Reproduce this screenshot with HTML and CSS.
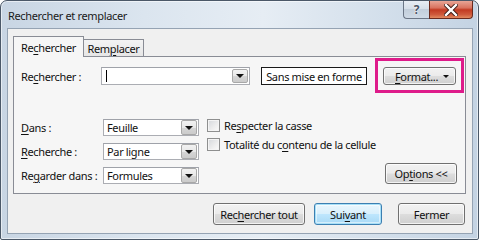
FILE: index.html
```html
<!DOCTYPE html>
<html lang="fr">
<head>
<meta charset="utf-8">
<title>Rechercher et remplacer</title>
<link rel="stylesheet" href="styles.css">
</head>
<body>
<div class="window">
  <div class="titlebar">
    <span class="title">Rechercher et remplacer</span>
    <div class="caption-btns">
      <div class="cap cap-help">?</div>
      <div class="cap cap-close">
        <svg width="14" height="12" viewBox="0 0 14 12"><path d="M2 1 L12 11 M12 1 L2 11" stroke="#3b1a14" stroke-width="4.2" stroke-linecap="square"/><path d="M2 1 L12 11 M12 1 L2 11" stroke="#ffffff" stroke-width="2.4" stroke-linecap="square"/></svg>
      </div>
    </div>
  </div>
  <div class="client">
    <div class="tabs">
      <div class="tab tab-active">Re<u>c</u>hercher</div>
      <div class="tab">Rem<u>p</u>lacer</div>
    </div>
    <div class="pane">
      <div class="find-row">
        <span class="lbl lbl-find">Re<u>c</u>hercher :</span>
        <div class="combo combo-find"><span class="caret"></span><span class="dd"><i class="tri"></i></span></div>
        <div class="preview">Sans mise en forme</div>
        <div class="highlight">
          <div class="btn btn-format"><span><u>F</u>ormat...</span><i class="tri tri-small"></i></div>
        </div>
      </div>
      <div class="options">
        <div class="sel-grid">
          <span class="lbl"><u>D</u>ans :</span>
          <div class="combo combo-sel"><span class="val">Feuille</span><span class="dd"><i class="tri"></i></span></div>
          <span class="lbl"><u>R</u>echerche :</span>
          <div class="combo combo-sel"><span class="val">Par ligne</span><span class="dd"><i class="tri"></i></span></div>
          <span class="lbl">Re<u>g</u>arder dans :</span>
          <div class="combo combo-sel"><span class="val">Formules</span><span class="dd"><i class="tri"></i></span></div>
        </div>
        <div class="right-col">
          <div class="check"><span class="box"></span><span>Re<u>s</u>pecter la casse</span></div>
          <div class="check"><span class="box"></span><span>Totalité du c<u>o</u>ntenu de la cellule</span></div>
          <div class="btn btn-options">Op<u>t</u>ions &lt;&lt;</div>
        </div>
      </div>
    </div>
    <div class="footer">
      <div class="btn btn-all">Rec<u>h</u>ercher tout</div>
      <div class="btn btn-next">Sui<u>v</u>ant</div>
      <div class="btn btn-close">Fermer</div>
    </div>
  </div>
</div>
</body>
</html>
```

FILE: styles.css
```css
* { box-sizing: border-box; }
html, body { margin: 0; padding: 0; background: #ffffff; }
body {
  font-family: "Noto Sans", "Open Sans", sans-serif;
  font-size: 11px;
  letter-spacing: -0.35px;
  color: #111111;
}
u { text-decoration: underline; text-underline-offset: 2px; text-decoration-thickness: 1px; }

.window {
  width: 479px;
  height: 240px;
  border: 1px solid #4b5868;
  border-radius: 7px 7px 2px 2px;
  background: linear-gradient(90deg, #c8d5e3 0%, #dbe5ef 30%, #e6edf4 55%, #d3dfeb 80%, #c4d3e3 100%);
  padding: 0 5px 5px 6px;
  display: flex;
  flex-direction: column;
  box-shadow: inset 0 0 0 1px rgba(255,255,255,0.55);
}

.titlebar {
  height: 27px;
  display: flex;
  align-items: flex-start;
  justify-content: space-between;
  flex-shrink: 0;
}
.title {
  font-size: 11px;
  color: #1a1a1a;
  padding-left: 1px;
  margin-top: 7px;
}
.caption-btns { display: flex; }
.cap {
  height: 18px;
  border: 1px solid #6b7686;
  border-top: none;
  display: flex;
  align-items: center;
  justify-content: center;
}
.cap-help {
  width: 26px;
  border-radius: 0 0 0 4px;
  border-right: none;
  background: linear-gradient(180deg, #e7edf4 0%, #d6dfe9 45%, #c2cedb 50%, #cfdae6 100%);
  color: #4a5566;
  font-size: 12px;
  font-weight: bold;
  letter-spacing: 0;
  text-shadow: 0 0 2px #fff, 0 0 1px #fff;
}
.cap-close {
  width: 44px;
  border-radius: 0 0 4px 0;
  border-color: #6a2a1e;
  background: linear-gradient(180deg, #e8a596 0%, #d9735f 40%, #c23a22 52%, #cf5a3c 80%, #e28a60 100%);
}

.client {
  flex: 1;
  background: #f0f0f0;
  border: 1px solid #95a3b3;
  padding: 7px 7px 0 5px;
  display: flex;
  flex-direction: column;
}

.tabs {
  display: flex;
  align-items: flex-end;
  height: 20px;
  position: relative;
  z-index: 1;
}
.tab {
  height: 17px;
  border: 1px solid #898c95;
  border-bottom: none;
  background: linear-gradient(180deg, #f3f3f3, #e6e6e6);
  display: flex;
  align-items: center;
  width: 61px;
  justify-content: center;
  margin-left: -1px;
  white-space: nowrap;
}
.tab-active {
  height: 21px;
  margin-bottom: -1px;
  width: 71px;
  margin-left: 0;
  background: #f6f6f6;
  padding-top: 1px;
  z-index: 2;
  position: relative;
}

.pane {
  width: 453px;
  height: 138px;
  border: 1px solid #898c95;
  background: #f6f6f6;
  padding: 10px 8px 0 7px;
}

.find-row {
  display: flex;
  align-items: center;
  height: 18px;
}
.lbl { white-space: nowrap; }
.lbl-find { width: 80px; }

.combo {
  height: 18px;
  background: #ffffff;
  border: 1px solid #abadb3;
  border-top-color: #9fa2a9;
  display: flex;
  align-items: center;
  justify-content: space-between;
  padding: 0 1px 0 4px;
}
.combo-find { width: 149px; }
.caret { width: 1px; height: 12px; background: #000; }
.dd {
  width: 16px;
  height: 14px;
  border: 1px solid #a8a8a8;
  border-radius: 2px;
  background: linear-gradient(180deg, #f2f2f2 0%, #e8e8e8 50%, #d6d6d6 51%, #cbcbcb 100%);
  display: flex;
  align-items: center;
  justify-content: center;
}
.tri {
  width: 0; height: 0;
  border-left: 4px solid transparent;
  border-right: 4px solid transparent;
  border-top: 4px solid #111;
}
.tri-small {
  border-left-width: 3px;
  border-right-width: 3px;
  border-top-width: 3px;
}

.preview {
  margin-left: 11px;
  width: 106px;
  height: 18px;
  border: 1px solid #1a1a1a;
  background: #ffffff;
  display: flex;
  align-items: center;
  justify-content: center;
  white-space: nowrap;
}

.highlight {
  position: relative;
  margin-left: 16px;
}
.highlight::after {
  content: "";
  position: absolute;
  left: -8px; right: -8px; top: -9px; bottom: -8px;
  border: 3px solid #de1b8a;
  pointer-events: none;
}

.btn {
  border: 1px solid #707070;
  border-radius: 3px;
  background: linear-gradient(180deg, #f2f2f2 0%, #ebebeb 48%, #dddddd 52%, #cfcfcf 100%);
  box-shadow: inset 0 0 0 1px rgba(255,255,255,0.75);
  display: flex;
  align-items: center;
  justify-content: center;
  white-space: nowrap;
}
.btn-format {
  width: 73px;
  height: 18px;
  justify-content: space-between;
  padding: 0 6px 0 11px;
}

.options {
  display: flex;
  margin-top: 34px;
}
.sel-grid {
  display: grid;
  grid-template-columns: 82px 96px;
  grid-auto-rows: 17px;
  row-gap: 7px;
  align-items: center;
}
.combo-sel { height: 17px; width: 96px; padding-left: 3px; }
.combo-sel .dd { height: 15px; }

.right-col {
  flex: 1;
  margin-left: 8px;
  display: flex;
  flex-direction: column;
}
.check {
  display: flex;
  align-items: center;
  height: 13px;
  margin-bottom: 6px;
  white-space: nowrap;
}
.box {
  width: 13px;
  height: 13px;
  border: 1px solid #8e8f8f;
  background: linear-gradient(135deg, #d4d7db 0%, #eeeeee 60%, #fbfbfb 100%);
  box-shadow: inset 0 0 0 1px #f4f4f4;
  margin-right: 4px;
  flex-shrink: 0;
}
.btn-options {
  margin-top: auto;
  align-self: flex-end;
  width: 72px;
  height: 21px;
}

.footer {
  display: flex;
  justify-content: flex-end;
  margin-top: 9px;
}
.footer .btn { height: 22px; }
.btn-all { width: 92px; }
.btn-next {
  width: 68px;
  margin-left: 9px;
  border-color: #3c7fb1;
  background: linear-gradient(180deg, #eaf6fd 0%, #d9f0fc 48%, #bee6fd 52%, #a7d9f5 100%);
  box-shadow: inset 0 0 0 1px #a7e0f8, inset 0 0 0 2px rgba(255,255,255,0.5);
}
.btn-close { width: 67px; margin-left: 16px; }
```
